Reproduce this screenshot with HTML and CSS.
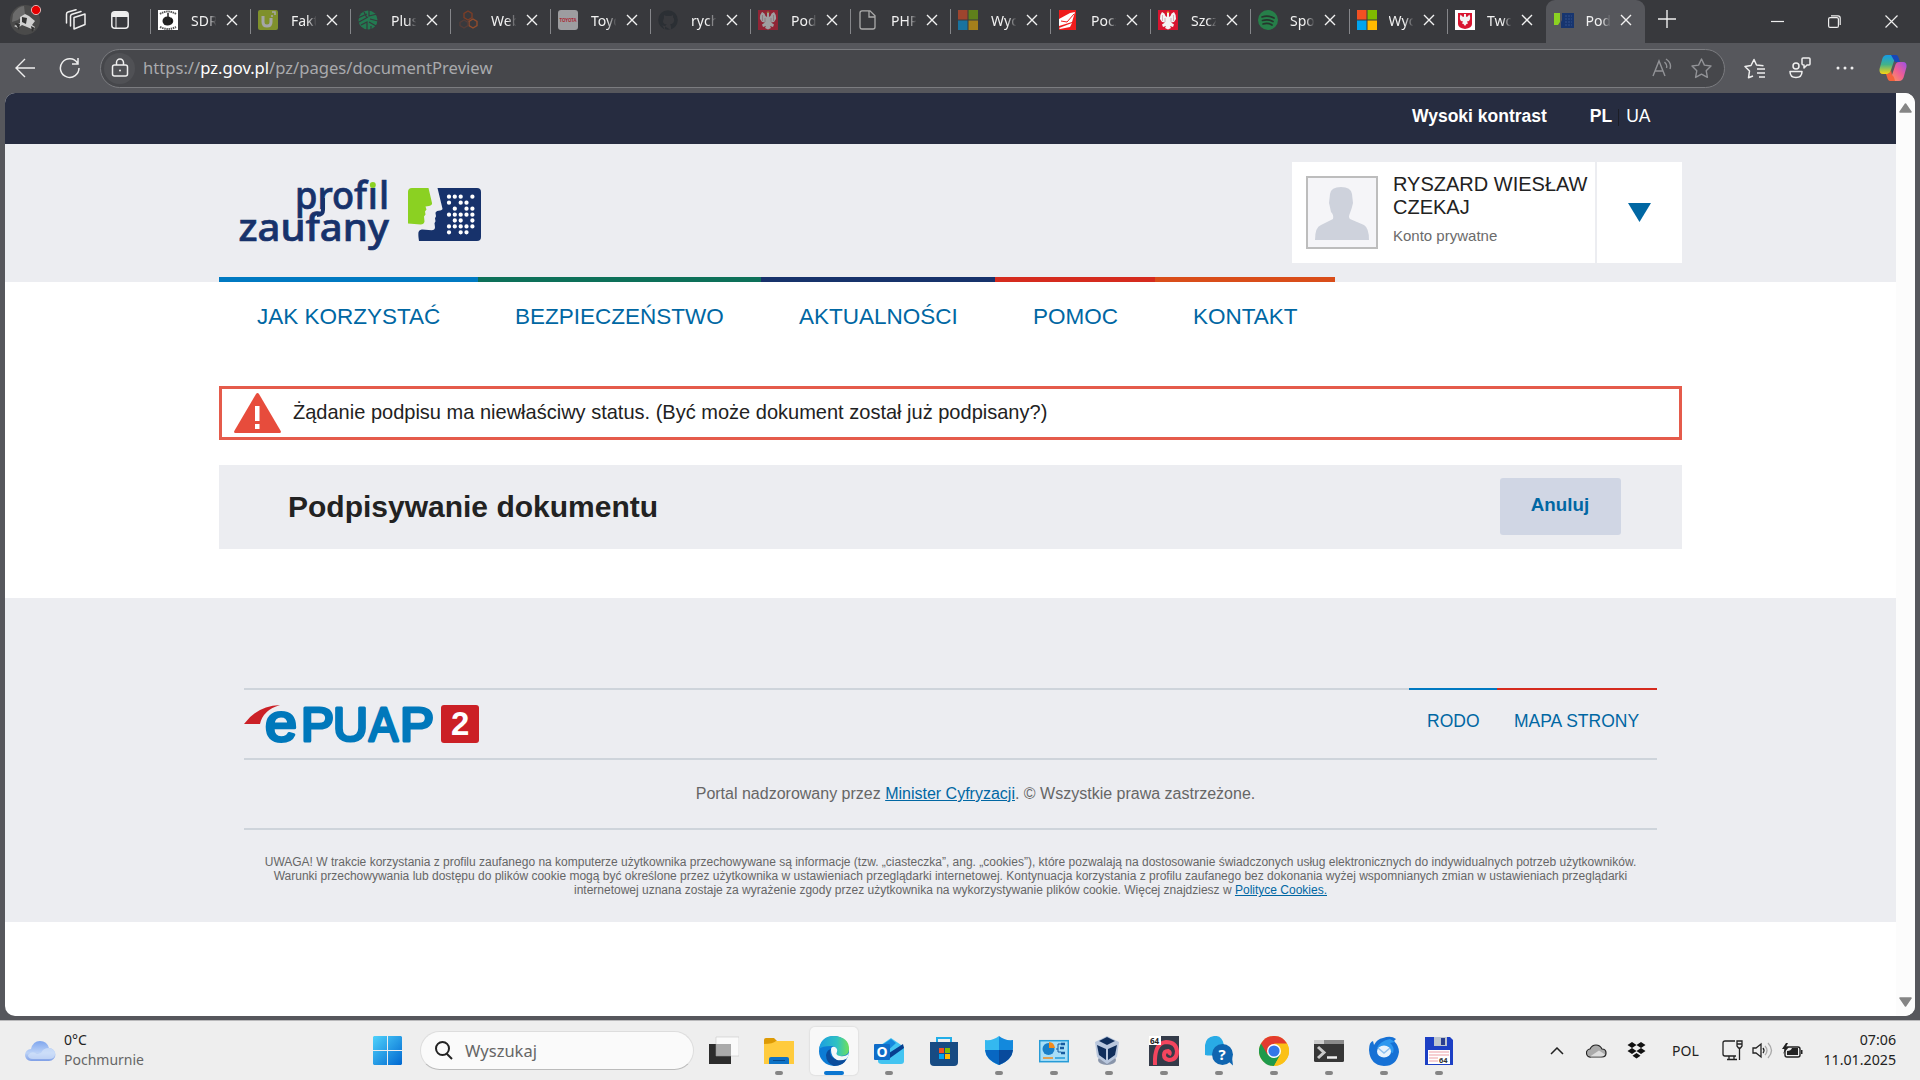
FILE: index.html
```html
<!DOCTYPE html>
<html lang="pl">
<head>
<meta charset="utf-8">
<title>Podpisywanie dokumentu</title>
<link rel="stylesheet" href="styles.css">
</head>
<body>
<svg width="0" height="0" class="defs">
  <defs>
    <symbol id="close" viewBox="0 0 12 12"><path d="M1 1 11 11M11 1 1 11" stroke="#f2f2f2" stroke-width="1.4" fill="none"/></symbol>
    <symbol id="eagle" viewBox="0 0 20 20"><rect width="20" height="20" fill="#d8142f"/><path d="M4 2q3 1 3.500 4L9 7V3h2v4l1.500-1Q13 3 16 2q2.500 3 2 7l-2 3-3 .5 3 2-1 2.500-3-1 1 2-3 1.500L7 18l1-2-3 1-1-2.500 3-2L4 12 2 9Q1.500 5 4 2z" fill="#f4f4f4"/><path d="M8.500 3 10 1l1.500 2z" fill="#e5b93c"/><path d="M4.500 5v6M15.500 5v6M7 8v4M13 8v4" stroke="#c9a0a8" stroke-width=".8"/></symbol>
    <symbol id="msft" viewBox="0 0 20 20"><path fill="#f25022" d="M0 0h9.500v9.500H0z"/><path fill="#7fba00" d="M10.500 0H20v9.500h-9.500z"/><path fill="#00a4ef" d="M0 10.500h9.500V20H0z"/><path fill="#ffb900" d="M10.500 10.500H20V20h-9.500z"/></symbol>
  </defs>
</svg>

<header class="tabstrip">
  <div class="strip-tools">
    <svg class="avatar" width="32" height="39" viewBox="0 0 32 39"><ellipse cx="15" cy="16" rx="15" ry="15" fill="#4a4a4a"/><path d="M3 10Q8 2 14 2l1 8-7 6-6 2z" fill="#6b6b6b"/><path d="M10 13l5-3 4 2 6 5-3 4 3 2-1 3-7-3-5-2-4 3-4-2 6-3z" fill="#cfcfcf"/><path d="M12 13l5 1-1 6-4-2zM5 19l5 1-1 6zM21 22l4 2-3 4z" fill="#333"/><circle cx="26" cy="6" r="4.600" fill="#e60000" stroke="#f6d5d5" stroke-width=".8"/></svg>
    <svg class="workspaces" width="22" height="22" viewBox="0 0 22 22" fill="none" stroke="#eee" stroke-width="1.500"><path d="M9 8.500 20 5v10.500L9 20z" stroke-linejoin="round"/><path d="M5.500 17V7Q5.500 6 7 5.300L16 2.500M1.500 14V5Q1.500 3.500 3 3l8-2.300" stroke-linecap="round"/></svg>
    <svg class="vertical-tabs" width="18" height="18" viewBox="0 0 18 18"><rect x=".8" y=".8" width="16.400" height="16.400" rx="3" fill="none" stroke="#eee" stroke-width="1.500"/><path d="M1 4q0-3 3-3h10q3 0 3 3v2H1z" fill="#eee"/><path d="M5 6v11" stroke="#eee"/></svg>
  </div>
  <div class="tabs">
    <div class="tab"><svg class="fav" viewBox="0 0 20 20"><rect width="20" height="20" fill="#fff"/><path d="M2 4q8-5 16 0M2 17q8 4 16 0" stroke="#555" stroke-width="2" stroke-dasharray="1.500 .7" fill="none"/><ellipse cx="9.500" cy="11" rx="5" ry="4.500" fill="#222"/><path d="M10 3v4M13 8q3 3 0 6" stroke="#222" stroke-width="1.500"/></svg><span>SDR</span><svg class="x"><use href="#close"/></svg></div>
    <div class="tab"><svg class="fav dim" viewBox="0 0 20 20"><rect width="20" height="20" rx="2" fill="#b9d81f"/><path d="M5 6v6q0 4 4 4t4-4V8" fill="none" stroke="#fff" stroke-width="3"/><path d="M14 2h3v3M13 6h2" stroke="#fff" stroke-width="1.500" fill="none"/></svg><span>Fakt</span><svg class="x"><use href="#close"/></svg></div>
    <div class="tab"><svg class="fav" viewBox="0 0 20 20"><circle cx="10" cy="10" r="9.500" fill="#237a51"/><path d="M0 8l9-4M1 12l9-5M3 15l6-3v8M11 0v6l8-2M12 9l8 2M11 12l7 4M13 16v4M6 2l3 6" stroke="#38393d" stroke-width="1.200" fill="none"/></svg><span>Plus</span><svg class="x"><use href="#close"/></svg></div>
    <div class="tab"><svg class="fav" viewBox="0 0 20 20" fill="none" stroke-width="1.400"><path d="M10 1l4 2.500v4L10 10 6 7.500v-4z" stroke="#7b3e27"/><path d="M15 9l4 2.500v4L15 18l-4-2.500v-4z" stroke="#914c2c"/><path d="M6 10l4 2.500v3L6 18l-4-2.500v-3z" stroke="#543d38"/></svg><span>Web</span><svg class="x"><use href="#close"/></svg></div>
    <div class="tab"><svg class="fav" viewBox="0 0 20 20"><rect width="20" height="20" rx="3" fill="#9d9da0"/><text x="1.500" y="12" font-size="5" font-weight="700" textLength="17" lengthAdjust="spacingAndGlyphs" fill="#a92a35">TOYOTA</text></svg><span>Toyo</span><svg class="x"><use href="#close"/></svg></div>
    <div class="tab"><svg class="fav" viewBox="0 0 20 20"><circle cx="10" cy="10" r="9.800" fill="#2b2f34"/><path d="M7 20v-4q-3 0-4-3M13 20v-3q0-2-1-2.500 5-.8 4-6l-1-1V5l-2 1H8L6 5v3q-3 6 3 6.500-1.500.5-2 2" fill="#38393d"/></svg><span>rych</span><svg class="x"><use href="#close"/></svg></div>
    <div class="tab"><svg class="fav dim"><use href="#eagle"/></svg><span>Pod</span><svg class="x"><use href="#close"/></svg></div>
    <div class="tab"><svg class="fav" viewBox="0 0 20 20" fill="none" stroke="#aaa" stroke-width="1.300"><path d="M4 .8h8l5 5V17q0 2-2 2H4q-2 0-2-2V3Q2 .8 4 .8zM11 1v6h6"/></svg><span>PHP</span><svg class="x"><use href="#close"/></svg></div>
    <div class="tab"><svg class="fav dim"><use href="#msft"/></svg><span>Wyc</span><svg class="x"><use href="#close"/></svg></div>
    <div class="tab"><svg class="fav" viewBox="0 0 20 20"><path fill="#ef1c1c" d="M1 0h17v20H1z"/><path d="M1 9 12 3l5-1-3 10-13 4z" fill="#fff"/><path d="M1 18l13-5-2 4-10 2z" fill="#fff"/><path d="M3 11l6 1 7-8" stroke="#ef1c1c" fill="none"/></svg><span>Pocz</span><svg class="x"><use href="#close"/></svg></div>
    <div class="tab"><svg class="fav"><use href="#eagle"/></svg><span>Szcz</span><svg class="x"><use href="#close"/></svg></div>
    <div class="tab narrow"><svg class="fav" viewBox="0 0 20 20"><circle cx="10" cy="10" r="10" fill="#267f49"/><path d="M4 7q6-2 12 1M4.500 10.500q6-1.500 10.500 1M5 14q5-1.500 9 1" stroke="#26352d" stroke-width="1.700" fill="none" stroke-linecap="round"/></svg><span>Spo</span><svg class="x"><use href="#close"/></svg></div>
    <div class="tab narrow"><svg class="fav"><use href="#msft"/></svg><span>Wyc</span><svg class="x"><use href="#close"/></svg></div>
    <div class="tab narrow"><svg class="fav" viewBox="0 0 20 20"><rect width="20" height="20" fill="#fff"/><path d="M3 3h14v11q0 4-7 5-7-1-7-5z" fill="#d8142f"/><path d="M5.500 4.500 8 7l1-.5V4h2v2.500l1 .5 2.500-2.500q1.500 4-.5 6.500l-2 .5 1 2-1.500.5-1.500 2-1.500-2L7 13.500l1-2-2-.5Q4 8.500 5.500 4.500z" fill="#f4f4f4"/></svg><span>Two</span><svg class="x"><use href="#close"/></svg></div>
    <div class="tab active"><svg class="fav" viewBox="0 0 20 20"><rect x="7" y="3" width="13" height="15" fill="#17356f"/><path d="M0 3h6l1 5-1 4-2 3H0z" fill="#8bd122"/><path d="M6 3h2v7l-2 4z" fill="#56575c"/><path d="M11 6h7M11 9h7M11 12h7M11 15h7" stroke="#35538d" stroke-dasharray="2 1"/></svg><span>Pod</span><svg class="x"><use href="#close"/></svg></div>
  </div>
  <svg class="new-tab" width="18" height="18" viewBox="0 0 18 18"><path d="M9 0v18M0 9h18" stroke="#eee" stroke-width="1.400"/></svg>
  <div class="window-controls">
    <svg width="13" height="13" viewBox="0 0 13 13"><path d="M0 6.500h13" stroke="#eee" stroke-width="1.200"/></svg>
    <svg width="13" height="13" viewBox="0 0 13 13" fill="none" stroke="#eee" stroke-width="1.200"><rect x=".6" y="2.600" width="9.800" height="9.800" rx="1.500"/><path d="M3 .8h7q2.200 0 2.200 2.200v7"/></svg>
    <svg width="13" height="13" viewBox="0 0 13 13"><path d="M.5.5l12 12M12.500.5l-12 12" stroke="#eee" stroke-width="1.200"/></svg>
  </div>
</header>

<div class="toolbar">
  <svg class="back" width="21" height="20" viewBox="0 0 21 20" fill="none" stroke="#eee" stroke-width="1.400"><path d="M20 10H1M10 1 1 10l9 9"/></svg>
  <svg class="reload" width="21" height="22" viewBox="0 0 21 22" fill="none" stroke="#eee" stroke-width="1.500"><path d="M18.500 6A9.300 9.300 0 1 0 20 11M19 1v6h-6"/></svg>
  <div class="address">
    <span class="lock"><svg width="18" height="20" viewBox="0 0 18 20" fill="none" stroke="#eee" stroke-width="1.500"><rect x="1.500" y="7" width="15" height="11" rx="2"/><path d="M5.500 7V4.500a3.500 3.500 0 0 1 7 0V7"/><circle cx="9" cy="12.500" r="1" fill="#eee" stroke="none"/></svg></span>
    <span class="url">https://<b>pz.gov.pl</b>/pz/pages/documentPreview</span>
    <svg class="read" width="20" height="20" viewBox="0 0 20 20" fill="none" stroke="#929397" stroke-width="1.400"><path d="M1 18 7 3l6 15M3 13h8M12.500 4q3 3 2 6M14 1q6 4 4 10"/></svg>
    <svg class="star" width="21" height="21" viewBox="0 0 21 21" fill="none" stroke="#929397" stroke-width="1.400" stroke-linejoin="round"><path d="M10.500 1l2.900 6.100 6.600.9-4.800 4.700 1.200 6.700-5.900-3.200-5.900 3.200 1.200-6.700L1 8l6.600-.9z"/></svg>
  </div>
  <svg class="favs" width="22" height="21" viewBox="0 0 22 21" fill="none" stroke="#eee" stroke-width="1.500" stroke-linejoin="round"><path d="M9 18l-4.500 1.800L5.500 13 1 8.500l6-1L10 1.500l2.500 5.500 7 .8M13 11h8M13 15h8M15 19h6"/></svg>
  <svg class="people" width="22" height="22" viewBox="0 0 22 22" fill="none" stroke="#eee" stroke-width="1.500" stroke-linejoin="round"><circle cx="7" cy="9" r="3"/><path d="M1 14.500h12q0 6-6 6t-6-6zM13 2q0-1 1-1h6q1 0 1 1v5q0 1-1 1h-2l-3 3V8q-2 0-2-1z"/></svg>
  <svg class="more" width="18" height="4" viewBox="0 0 18 4" fill="#eee"><circle cx="2" cy="2" r="1.500"/><circle cx="9" cy="2" r="1.500"/><circle cx="16" cy="2" r="1.500"/></svg>
  <svg class="copilot" width="28" height="26" viewBox="0 0 28 26"><defs><linearGradient id="c1" x2="0" y2="1"><stop stop-color="#159ce8"/><stop offset=".5" stop-color="#42b28a"/><stop offset="1" stop-color="#fbd411"/></linearGradient><linearGradient id="c2" x1="1" x2="0" y2="1"><stop stop-color="#9b50e6"/><stop offset=".5" stop-color="#ef5e94"/><stop offset="1" stop-color="#ff9c55"/></linearGradient></defs><path d="M8 0h9l-5 15q-1 4-4 4H4q-4 0-3.500-5L3 5q1-5 5-5z" fill="url(#c1)"/><path d="M12 0h5q2 0 3 4l1 3h-5z" fill="#1747b8"/><path d="M20 26h-9l5-15q1-4 4-4h4q4 0 3.500 5L25 21q-1 5-5 5z" fill="url(#c2)"/><path d="M16 26h-5q-2 0-3-4l-1-3h1q3 0 4-4l1 5q2 1 3 6z" fill="#f4633c"/></svg>
</div>

<div class="viewport">
  <main class="page">
    <div class="topbar"><b>Wysoki kontrast</b><b class="lang">PL</b><i></i><span>UA</span></div>
    <div class="brandbar">
      <div class="container brandrow">
        <svg class="pz-logo" width="250" height="90" viewBox="236 174 250 90">
          <g fill="#17326b" stroke="#17326b" stroke-width=".7" font-family="'Noto Sans'" font-size="37.500" font-weight="500">
            <text x="295" y="208.700" textLength="72" lengthAdjust="spacingAndGlyphs">prof</text>
            <text x="367.800" y="208.700">ı</text>
            <text x="379" y="208.700">l</text>
            <text x="238.500" y="240.600" textLength="150.500" lengthAdjust="spacingAndGlyphs">zaufany</text>
          </g>
          <path d="M323 198v12q0 5-6 5" fill="none" stroke="#17326b" stroke-width="4"/>
          <circle cx="372.800" cy="185" r="3" fill="#8bd122"/>
          <path d="M408 192q0-4 4-4h16.500l3.500 15q.5 2-3 3l-3.500.5 1 3-1.500 2 .5 3-1.500 2 .5 5q-.5 3-4 3l-12.500-1z" fill="#8bd122"/>
          <path d="M437.500 188H477q4 0 4 4v45q0 4-4 4h-58q-1-6-.5-9 1-3 4-2.500l9 .8q3.500 0 3.500-3l-.5-4 1-2-.5-3 1-2-.5-3q0-2 3-2.500 4-.5 4-2z" fill="#17326b"/>
          <path d="M449 196.700h0m5.800 0h0m5.900 0h0m11.700 0h0M449 202.700h0m11.700 0h0m5.800 0h0M454.800 208.700h0m11.700 0h0m5.900 0h0M449 214.700h0m5.800 0h0m5.900 0h0m5.800 0h0m5.900 0h0M454.800 220.500h0m5.900 0h0m11.700 0h0M449 226.400h0m5.800 0h0m5.900 0h0m5.800 0h0m5.900 0h0M449 232.300h0m11.700 0h0m5.800 0h0" fill="none" stroke="#fff" stroke-width="4.300" stroke-linecap="round"/>
        </svg>
        <div class="user">
          <div class="user-main">
            <svg class="portrait" width="68" height="69" viewBox="0 0 68 69"><rect width="68" height="69" fill="#f5f5f8"/><path d="M7 62q0-13 6-15l12-6q1-4-2-7-1-5-2-9l1-9Q23 9 33 9t11 7l1 9q-1 5-3 10-2 4 0 6l14 6q5 3 5 15z" fill="#ced2dc"/></svg>
            <div><p class="name">RYSZARD WIESŁAW<br>CZEKAJ</p><p class="account">Konto prywatne</p></div>
          </div>
          <div class="user-toggle"><svg width="23" height="19" viewBox="0 0 23 19"><path d="M0 0h23L11.500 19z" fill="#0067a3"/></svg></div>
        </div>
      </div>
    </div>
    <nav class="container mainnav">
      <a class="n1">JAK KORZYSTAĆ</a><a class="n2">BEZPIECZEŃSTWO</a><a class="n3">AKTUALNOŚCI</a><a class="n4">POMOC</a><a class="n5">KONTAKT</a>
    </nav>
    <div class="container alert">
      <svg width="47" height="40" viewBox="0 0 47 40"><path d="M22 1q1.500-2 3 0l22 37.500q0 1.500-1.500 1.500h-44Q0 40 0 38.500z" fill="#e74c3c"/><path d="M21 13h4.500v15H21zM21 31h4.500v5H21z" fill="#fff"/></svg>
      <span>Żądanie podpisu ma niewłaściwy status. (Być może dokument został już podpisany?)</span>
    </div>
    <div class="container titlebar"><h1>Podpisywanie dokumentu</h1><button>Anuluj</button></div>
    <footer>
      <div class="foot">
        <div class="foot-row logos">
          <svg class="epuap" width="236" height="40" viewBox="244 704 236 40">
            <path d="M244 724q13-18 36-19-17 5-20 19z" fill="#cb2026"/>
            <g fill="#0078bb" stroke="#0078bb" stroke-linejoin="round" stroke-width="3.200" font-family="'Liberation Sans'" font-size="49">
              <text x="265" y="740.500" font-size="53" textLength="32" lengthAdjust="spacingAndGlyphs">e</text>
              <text x="301" y="741" textLength="33" lengthAdjust="spacingAndGlyphs">P</text>
              <text x="333" y="741" textLength="35" lengthAdjust="spacingAndGlyphs">U</text>
              <text x="369" y="741" textLength="29" lengthAdjust="spacingAndGlyphs">A</text>
              <text x="400" y="741" textLength="34" lengthAdjust="spacingAndGlyphs">P</text>
            </g>
            <rect x="441" y="705" width="38" height="38" rx="3" fill="#cb2026"/>
            <text x="451" y="735" font-family="'Liberation Sans'" font-size="33" font-weight="700" fill="#fff">2</text>
          </svg>
          <div class="footnav"><a class="rodo">RODO</a><a class="map">MAPA STRONY</a></div>
        </div>
        <div class="foot-row portal">Portal nadzorowany przez&nbsp;<a>Minister Cyfryzacji</a>. © Wszystkie prawa zastrzeżone.</div>
        <p class="legal">UWAGA! W trakcie korzystania z profilu zaufanego na komputerze użytkownika przechowywane są informacje (tzw. „ciasteczka”, ang. „cookies”), które pozwalają na dostosowanie świadczonych usług elektronicznych do indywidualnych potrzeb użytkowników.<br>Warunki przechowywania lub dostępu do plików cookie mogą być określone przez użytkownika w ustawieniach przeglądarki internetowej. Kontynuacja korzystania z profilu zaufanego bez dokonania wyżej wspomnianych zmian w ustawieniach przeglądarki<br>internetowej uznana zostaje za wyrażenie zgody przez użytkownika na wykorzystywanie plików cookie. Więcej znajdziesz w <a>Polityce Cookies.</a></p>
      </div>
    </footer>
  </main>
  <div class="scrollbar">
    <svg width="13" height="10" viewBox="0 0 13 10"><path d="M6.500 1 12 9H1z" fill="#858585" stroke="#858585" stroke-linejoin="round" stroke-width="1.500"/></svg>
    <svg width="13" height="10" viewBox="0 0 13 10"><path d="M6.500 9 12 1H1z" fill="#858585" stroke="#858585" stroke-linejoin="round" stroke-width="1.500"/></svg>
  </div>
</div>

<div class="taskbar">
  <div class="weather">
    <svg width="31" height="20" viewBox="0 0 31 20"><defs><linearGradient id="cl" x2="0" y2="1"><stop stop-color="#7fa6ee"/><stop offset=".6" stop-color="#bdd3f7"/><stop offset="1" stop-color="#7f9fe6"/></linearGradient></defs><path d="M6 20a6 6 0 0 1 0-12Q8 0 15 0t9 7a6.500 6.500 0 0 1 0 13z" fill="url(#cl)"/><path d="M16 12q2-5 8-5 6 1 6 6t-6 5H8q-5 0-5-4 4-5 9-1z" fill="#d3e2fa" opacity=".7"/></svg>
    <p>0°C<br><span>Pochmurnie</span></p>
  </div>
  <svg class="start" width="29" height="29" viewBox="0 0 29 29"><defs><linearGradient id="win" x2="1" y2="1"><stop stop-color="#4fd2fb"/><stop offset="1" stop-color="#0067d0"/></linearGradient></defs><path d="M1 0h13v14H0V1zM15 0h13l1 1v13H15zM0 15h14v14H1l-1-1zM15 15h14v13l-1 1H15z" fill="url(#win)"/></svg>
  <div class="search"><svg width="19" height="19" viewBox="0 0 19 19" fill="none" stroke="#222" stroke-width="2"><circle cx="8.500" cy="7.500" r="6.500"/><path d="M12.500 12.500 18 18"/></svg><span>Wyszukaj</span></div>
  <div class="apps">
    <div class="app idle"><svg viewBox="0 0 30 30"><path d="M0 8h22v20H0z" fill="#2c2c2c"/><path d="M7 1h23v19H7z" fill="#fff" opacity=".72" stroke="#bbb" stroke-width=".6"/><path d="M7 8h15v12H7z" fill="#999" opacity=".6"/></svg></div>
    <div class="app"><svg viewBox="0 0 30 30"><path d="M0 4q0-2 2-2h8l3 3v4H0z" fill="#dd9a05"/><path d="M0 8q9 0 12-3h18v23H0z" fill="#ffcb3d"/><path d="M5 28v-5q0-2 2-2h16q2 0 2 2v5z" fill="#0d72c6"/><path d="M9 24.500h12" stroke="#06498c"/></svg></div>
    <div class="app current"><svg viewBox="0 0 30 30"><defs><linearGradient id="eg"><stop stop-color="#1b9ee2"/><stop offset=".6" stop-color="#2fc2c2"/><stop offset="1" stop-color="#6fe05a"/></linearGradient></defs><circle cx="15" cy="15" r="15" fill="#0c7cd5"/><path d="M0 13Q2 0 15 0q15 1 15 13 0 7-8 7-5 0-5-2 2-2 1-4-1-4-6-4Q3 10 0 13z" fill="url(#eg)"/><path d="M11 15q0 8 9 9 5 0 8-2-3 8-13 8-8-3-8-11 1-6 6-6-2 1-2 2z" fill="#0b4d9c"/><path d="M12 14q0-4 4-3 3 2 2 5-2 3 3 4 6 1 9-3-1 5-3 6-4 2-9 1-6-3-6-10z" fill="#f4f8f8"/></svg></div>
    <div class="app"><svg viewBox="0 0 30 30"><path d="M4 11 17 2l13 9v14q0 3-3 3H8q-4 0-4-3z" fill="#43c4f1"/><path d="M5 11 17 3l5 4-12 11H5z" fill="#1688de"/><path d="M15 17 29 8l1 4-14 10z" fill="#073f8f"/><rect y="8" width="16" height="16" rx="1" fill="#0f6cc8"/><text x="2.500" y="21" font-size="14" font-weight="700" fill="#fff">O</text></svg></div>
    <div class="app idle"><svg viewBox="0 0 30 30"><path d="M8 8V2h14v6" fill="none" stroke="#22aee8" stroke-width="2"/><path d="M1 6h28v20q0 4-4 4H5q-4 0-4-4z" fill="#174b83"/><path d="M10 12h5v5h-5z" fill="#f25022"/><path d="M16 12h5v5h-5z" fill="#7fba00"/><path d="M10 18h5v5h-5z" fill="#00a4ef"/><path d="M16 18h5v5h-5z" fill="#ffb900"/></svg></div>
    <div class="app"><svg viewBox="0 0 30 30"><path d="M15 0v29Q1 24 1 12V4q8 1 14-4z" fill="#34b8f0"/><path d="M15 0v29q14-5 14-17V4q-8 1-14-4z" fill="#1389dd"/><path d="M1 14h14v15Q2 24 1 14z" fill="#0867c2"/><path d="M29 14H15v15q13-5 14-15z" fill="#084a9c"/></svg></div>
    <div class="app"><svg viewBox="0 0 30 30"><rect x=".7" y="4.700" width="28.600" height="21" fill="#a7def7" stroke="#269bd7" stroke-width="1.500"/><circle cx="9.500" cy="13" r="6" fill="#1a7fc8"/><path d="M10 12V6q5 0 6 6z" fill="#f28b1c"/><path d="M17 13h2V8h3M19 13v3h3" stroke="#175ba0" stroke-width="1" fill="none"/><path d="M22 8h4M21 12h4M22 17h4" stroke="#175ba0" stroke-width="2.500"/><path d="M4 22h10" stroke="#f28b1c" stroke-width="1.500"/><path d="M16 22h10" stroke="#249bd8" stroke-width="1.500"/></svg></div>
    <div class="app"><svg class="vbox" viewBox="0 0 30 30"><ellipse cx="15" cy="24" rx="9" ry="5" fill="#8995aa"/><path d="M3 6 15 0l12 6-2 15-10 7-10-7z" fill="#b9c7dd"/><path d="M7 5l8-4 8 4-8 4zM5 9l9 4v11l-7-5zM25 9l-9 4v11l7-5z" fill="#102e5b"/></svg></div>
    <div class="app"><svg viewBox="0 0 30 30"><rect width="30" height="30" fill="#343b49"/><path d="M6 29Q5 7 17 6q10 0 11 9 0 9-8 9-5-1-5-5 0-4 4-4 3 1 1 4" fill="none" stroke="#f3455e" stroke-width="4"/><path d="M0 0h12v9H0z" fill="#fff"/><text x="1" y="7.500" font-size="8" font-weight="700" fill="#222">64</text></svg></div>
    <div class="app"><svg viewBox="0 0 30 30"><path d="M1 19V9q1-8 9-9t10 9q0 9-9 10-5 1-10 0z" fill="#29abe6"/><circle cx="18.500" cy="18.500" r="10.500" fill="#0f65b0"/><path d="M24 25l5 4.500-1-8z" fill="#0f65b0"/><text x="14.500" y="24" font-size="15" font-weight="700" fill="#fff">?</text></svg></div>
    <div class="app"><svg viewBox="0 0 30 30"><circle cx="15" cy="15" r="15" fill="#fbc116"/><path d="M2 7.500A15 15 0 0 0 15 30l6.500-11.500L15 15z" fill="#1f9a4b"/><path d="M2 7.500 8.500 18.500 15 15 28 7.500A15 15 0 0 0 2 7.500z" fill="#e33b2e"/><path d="M15 7.500h13A15 15 0 0 1 15 30l6.500-11.500z" fill="#fbc116"/><circle cx="15" cy="15" r="7" fill="#fff"/><circle cx="15" cy="15" r="5.600" fill="#3277e8"/></svg></div>
    <div class="app"><svg viewBox="0 0 30 30"><rect y="4" width="30" height="22" rx="1.500" fill="#363636"/><path d="M0 4h30v4H0z" fill="#8a8a8a"/><path d="M0 4h10v4H0z" fill="#ccc"/><path d="M4 11l6 5.500L4 22" stroke="#c9c9c9" stroke-width="3" fill="none"/><path d="M13 21.500h10" stroke="#eee" stroke-width="2.500"/></svg></div>
    <div class="app"><svg viewBox="0 0 30 30"><path d="M0 14Q0 6 4 5l1 4q3-6 9-7 8-3 13 1l-2 2q5 5 5 11-2 14-15 14Q1 29 0 14z" fill="#1671d5"/><path d="M8 12q3-7 13-9l5 3-5 1q5 4 3 10z" fill="#2e98ef"/><ellipse cx="15" cy="15.500" rx="7" ry="6" fill="#e8f3fc"/><path d="M9 12l6 5 6-5" fill="none" stroke="#8fc0ee" stroke-width="1.500"/></svg></div>
    <div class="app"><svg viewBox="0 0 30 30"><path d="M1 1h25l3 3v25H1z" fill="#1c3fc4"/><path d="M10 1h13v9H10z" fill="#bcc4ce"/><path d="M17 2h4v7h-4z" fill="#2b3f8f"/><path d="M4 14h22v14H4z" fill="#fff"/><path d="M5 16h20M5 19h20M5 22h9M5 25h9" stroke="#eea0a5" stroke-width="1.200"/><text x="15" y="26.500" font-size="7.500" font-weight="700" fill="#333">64</text></svg></div>
  </div>
  <div class="tray">
    <svg class="chev" width="14" height="8" viewBox="0 0 14 8"><path d="M1 7l6-6 6 6" fill="none" stroke="#222" stroke-width="1.500"/></svg>
    <svg class="onedrive" width="21" height="14" viewBox="0 0 21 14"><path d="M5 13a4 4 0 0 1-1-8Q6 1 10 1t6 4q4 0 4 4t-4 4z" fill="#aaa" stroke="#222" stroke-width="1.200"/><path d="M4 12.500l9-6 6 4q-1 2-4 2z" fill="#ddd"/></svg>
    <svg class="dropbox" width="19" height="17" viewBox="0 0 19 17"><path d="M5 0l4.500 3L5 6 .5 3zM14 0l4.500 3L14 6 9.500 3zM5 6l4.500 3L5 12 .5 9zM14 6l4.500 3-4.500 3-4.500-3zM9.500 11l4 2.700-4 2.800-4-2.800z" fill="#111"/></svg>
    <span class="kb">POL</span>
    <svg class="net" width="21" height="21" viewBox="0 0 21 21" fill="none" stroke="#222" stroke-width="1.300"><path d="M13 1H3Q1 1 1 3v11q0 2 2 2h11M5 19.500h10M7 16v3M12 16v3M15 1h5v5l-1.500 2h-2L15 6zM17.500 8v12M15 4h5"/></svg>
    <svg class="sound" width="21" height="17" viewBox="0 0 21 17" fill="none" stroke="#222" stroke-width="1.300"><path d="M1 6h3l5-4v13l-5-4H1zM11 6q2 2.500 0 5"/><path d="M13 4q4 4.500 0 9M16 1q7 7.500 0 15" stroke="#aaa"/></svg>
    <svg class="battery" width="21" height="16" viewBox="0 0 21 16"><rect x="3" y="4" width="15" height="10" rx="2" fill="none" stroke="#222" stroke-width="1.400"/><path d="M5 8q4 0 5-3h6v7H5zM19 7h1.500v4H19zM4 0 0 6h3l-2 5 6-7H4L6 0z" fill="#222"/></svg>
    <p class="clock">07:06<br>11.01.2025</p>
  </div>
</div>
</body>
</html>
```
FILE: styles.css
```css
* { box-sizing: border-box; }
body {
  margin: 0;
  width: 1920px;
  height: 1080px;
  overflow: hidden;
  display: flex;
  flex-direction: column;
  background: #56575c;
  font-family: "Noto Sans", "Open Sans", sans-serif;
}
p, h1 { margin: 0; }
svg { display: block; flex: none; }
.defs { position: absolute; }

/* Browser tabs */
.tabstrip { height: 43px; flex: none; display: flex; background: #38393d; }
.strip-tools { width: 150px; flex: none; display: flex; padding-left: 10px; }
.avatar { margin-top: 4px; }
.workspaces { margin: 9px 0 0 23px; }
.vertical-tabs { margin: 11px 0 0 24px; }
.tabs { display: flex; }
.tab {
  width: 100px;
  display: flex;
  align-items: center;
  padding: 0 0 3px 8px;
  font-size: 14px;
  color: #f2f2f2;
  background: linear-gradient(#85868a, #85868a) 0 9px / 1px 25px no-repeat;
}
.tab.narrow { width: 98.500px; }
.tab.active { width: 99px; background: #56575c; border-radius: 9px 9px 0 0; }
.fav { width: 20px; height: 20px; }
.fav.dim { opacity: .55; }
.tab span {
  width: 26px;
  margin-left: 13px;
  overflow: hidden;
  white-space: nowrap;
  mask-image: linear-gradient(90deg, #000 62%, transparent 98%);
}
.tab.narrow span, .tab.active span { width: 25px; margin-left: 12px; }
.x { width: 12px; height: 12px; margin-left: 9px; }
.new-tab { margin: 10px 0 0 13px; }
.window-controls { display: flex; gap: 44px; margin: 15px 0 0 auto; padding-right: 22px; }

/* Address row */
.toolbar { height: 50px; flex: none; display: flex; align-items: center; padding-left: 15px; }
.reload { margin-left: 23px; }
.address {
  width: 1625px;
  height: 39px;
  margin-left: 20px;
  display: flex;
  align-items: center;
  border: 1px solid #7b7c80;
  border-radius: 20px;
  background: #46474b;
}
.lock {
  width: 31px;
  height: 31px;
  margin-left: 3px;
  display: grid;
  place-items: center;
  border-radius: 50%;
  background: #505155;
}
.url { margin-left: 8px; padding-bottom: 2px; font-size: 16.6px; color: #a9aaad; }
.url b { font-weight: 400; color: #fff; }
.read { margin-left: auto; }
.star { margin: 0 12px 0 19px; }
.favs { margin-left: 19px; }
.people { margin-left: 23px; }
.more { margin-left: 25px; }
.copilot { margin-left: 25px; }

/* Page viewport */
.viewport {
  width: 1910px;
  height: 923px;
  flex: none;
  margin-left: 5px;
  display: flex;
  border-radius: 10px;
  overflow: hidden;
  background: #fff;
}
.page { width: 1891px; font-family: "Liberation Sans", Arial, sans-serif; color: #222; }
.scrollbar {
  width: 19px;
  padding: 10px 0 9px;
  display: flex;
  flex-direction: column;
  justify-content: space-between;
  align-items: center;
  background: #fcfcfc;
}
.topbar {
  height: 51px;
  display: flex;
  padding: 13px 0 0 1407px;
  font-size: 17.5px;
  line-height: 20px;
  color: #fff;
  background: #262c40;
}
.topbar .lang { margin-left: 43px; }
.topbar i { width: 1px; height: 17px; margin: 3px 7px 0 6px; background: #1b1d26; }
.container { width: 1463px; margin-left: 214px; }
.brandbar { height: 138px; background: #ecedf1; }
.brandrow { display: flex; justify-content: space-between; }
.pz-logo { margin: 30px 0 0 17px; }
.user { width: 390px; height: 101px; margin-top: 18px; display: flex; justify-content: space-between; }
.user-main { width: 303px; display: flex; gap: 15px; padding: 14px 0 0 14px; background: #fff; }
.portrait { width: 72px; height: 73px; border: 2px solid #bdbdbd; }
.name { margin-top: -3px; font-size: 20px; line-height: 23px; white-space: nowrap; }
.account { margin-top: 7px; font-size: 15px; line-height: 20px; color: #6b6b6b; }
.user-toggle { width: 85px; display: grid; place-items: center; background: #fff; }
.mainnav { display: flex; margin-top: -5px; height: 109px; }
.mainnav a {
  padding: 21px 0 0 38px;
  border-top: 5px solid;
  font-size: 22.5px;
  line-height: 28px;
  white-space: nowrap;
}
.n1 { width: 259px; border-color: #0079c1 !important; }
.n2 { width: 283px; padding-left: 37px !important; border-color: #0d7059 !important; }
.n3 { width: 234px; border-color: #17326b !important; }
.n4 { width: 160px; border-color: #d52b1e !important; }
.n5 { width: 180px; border-color: #d94d1a !important; }
a { color: #0067a3; }
.alert {
  height: 54px;
  display: flex;
  align-items: center;
  gap: 12px;
  padding-left: 12px;
  border: 3px solid #e55b4b;
  font-size: 20.03px;
}
.alert span { padding-bottom: 2px; }
.titlebar {
  height: 84px;
  margin-top: 25px;
  display: flex;
  justify-content: space-between;
  padding: 0 61px 0 69px;
  background: #ecedf1;
}
.titlebar h1 { margin-top: 25px; font-size: 30px; line-height: 34px; }
.titlebar button {
  width: 121px;
  height: 57px;
  margin-top: 13px;
  padding: 0 1px 3px 0;
  border: 0;
  border-radius: 3px;
  background: #d0d6e4;
  color: #0067a3;
  font: 700 18.75px "Liberation Sans", Arial, sans-serif;
}
footer { height: 324px; margin-top: 49px; padding-top: 90px; background: #ecedf1; }
.foot { width: 1413px; margin-left: 239px; }
.foot-row { height: 70px; border-top: 2px solid #ced4db; }
.logos { display: flex; justify-content: space-between; }
.epuap { margin-top: 14px; }
.footnav { display: flex; margin-top: -2px; font-size: 17.5px; line-height: 20px; }
.footnav a { height: 60px; padding: 21px 0 0 18px; border-top: 2px solid; }
.rodo { width: 88px; border-color: #0079c1 !important; }
.map { width: 160px; padding-left: 17px !important; border-color: #d52b1e !important; }
.portal {
  display: flex;
  justify-content: center;
  padding: 24px 0 0 50px;
  font-size: 16px;
  line-height: 20px;
  color: #666;
}
.portal a, .legal a { text-decoration: underline; }
.legal {
  padding: 25px 0 0;
  border-top: 2px solid #ced4db;
  text-align: center;
  white-space: nowrap;
  font-size: 12px;
  line-height: 14px;
  color: #666;
}

/* Taskbar */
.taskbar {
  height: 60px;
  flex: none;
  margin-top: 4px;
  display: flex;
  align-items: center;
  border-top: 1px solid #b9b9bb;
  background: #eee;
}
.weather { width: 373px; display: flex; align-items: center; gap: 8px; padding-left: 25px; font-size: 14px; line-height: 20px; color: #222; }
.weather p { padding-bottom: 2px; }
.weather span { color: #666; }
.search {
  width: 274px;
  height: 39px;
  margin-left: 18px;
  display: flex;
  align-items: center;
  gap: 12px;
  padding-left: 13px;
  border: 1px solid #ddd;
  border-bottom-color: #bbb;
  border-radius: 20px;
  background: #fafafa;
  font-size: 16.5px;
  color: #666;
}
.apps { display: flex; gap: 7px; margin-left: 6px; }
.app {
  width: 48px;
  height: 48px;
  display: flex;
  flex-direction: column;
  align-items: center;
  padding-top: 9px;
  border-radius: 5px;
}
.app svg { width: 30px; height: 30px; }
.app .vbox { margin-left: -4px; }
.app::after { content: ""; width: 8px; height: 4px; margin-top: 5px; border-radius: 2px; background: #858585; }
.app.idle::after { background: none; }
.app.current { background: #f8f8f8; box-shadow: 0 0 1px 1px #e2e2e2; }
.app.current::after { width: 20px; background: #0b76d1; }
.tray { display: flex; align-items: center; margin-left: auto; padding-right: 24px; font-size: 15px; color: #222; }
.onedrive { margin-left: 22px; }
.dropbox { margin-left: 20px; }
.kb { width: 27px; margin-left: 26px; font-size: 14px; }
.net { margin-left: 23px; }
.sound { margin-left: 9px; }
.battery { margin-left: 9px; }
.clock { width: 93px; padding-bottom: 2px; text-align: right; font-size: 14.2px; line-height: 20px; }
```
